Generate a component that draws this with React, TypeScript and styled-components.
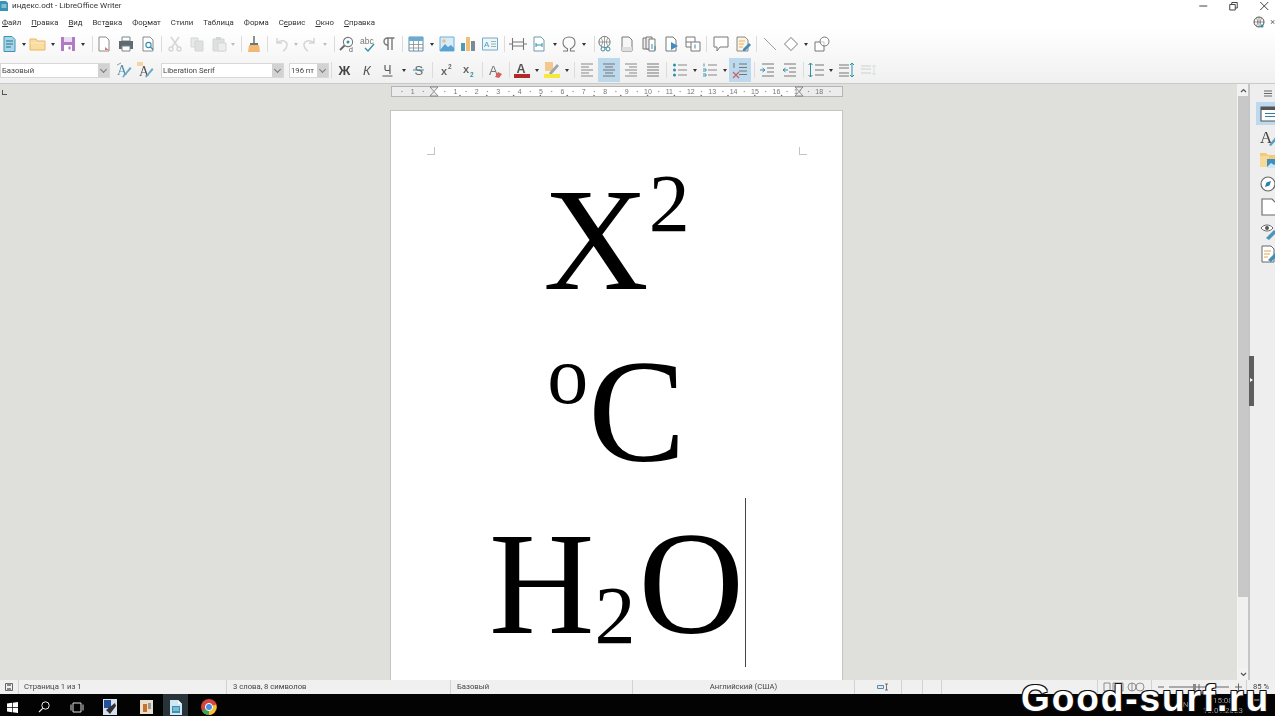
import React from "react";
import styled, { createGlobalStyle } from "styled-components";

const Global = createGlobalStyle`
  html, body { margin: 0; padding: 0; background: #000; }
  * { box-sizing: border-box; }
`;

const UI = `Roboto, "Noto Sans", "Liberation Sans", sans-serif`;

const Shell = styled.div`
  position: relative;
  width: 1275px;
  height: 716px;
  overflow: hidden;
  display: flex;
  flex-direction: column;
  font-family: ${UI};
  color: #333;
`;
const Header = styled.header`
  height: 83px;
  flex: none;
  display: flex;
  flex-direction: column;
  background: linear-gradient(#ffffff 0, #ffffff 28px, #f0f0f0 83px);
  filter: blur(0.4px);
`;
const TitleBar = styled.div`
  height: 11px;
  display: flex;
  align-items: center;
  font-size: 8.1px;
  line-height: 11px;
  color: #333;
`;
const TitleIcon = styled.svg`
  width: 8px;
  height: 10px;
  margin-right: 4px;
  flex: none;
`;
const WindowButtons = styled.div`
  margin-left: auto;
  margin-right: -4px;
  display: flex;
  align-items: center;
`;
const WindowButton = styled.svg`
  width: 30.5px;
  height: 10px;
`;
const MenuBar = styled.nav`
  height: 22px;
  display: flex;
  align-items: center;
  padding-left: 2px;
  gap: 10px;
  font-size: 7.8px;
  color: #333;
`;
const MenuItem = styled.span`
  white-space: nowrap;
`;
const MenuEnd = styled.div`
  margin-left: auto;
  display: flex;
  align-items: center;
  gap: 5px;
  margin-right: 0;
  font-size: 9px;
  color: #666;
`;
const Toolbar = styled.div<{ $h: number; $top?: number }>`
  height: ${(p) => p.$h}px;
  padding-top: ${(p) => p.$top || 0}px;
  display: flex;
  align-items: center;
`;
const Tool = styled.div<{ $w: number; $active?: boolean }>`
  width: ${(p) => p.$w}px;
  height: 24px;
  flex: none;
  display: flex;
  align-items: center;
  justify-content: center;
  background: ${(p) => (p.$active ? "#bcd9ee" : "transparent")};
`;
const Caret = styled.div<{ $w: number; $dim?: boolean }>`
  width: ${(p) => p.$w}px;
  flex: none;
  display: flex;
  align-items: center;
  justify-content: center;
  opacity: ${(p) => (p.$dim ? 0.3 : 1)};
  &::before {
    content: "";
    border-left: 2.5px solid transparent;
    border-right: 2.5px solid transparent;
    border-top: 3px solid #333;
  }
`;
const Sep = styled.div<{ $w: number }>`
  width: ${(p) => p.$w}px;
  flex: none;
  display: flex;
  justify-content: center;
  &::before {
    content: "";
    width: 1px;
    height: 16px;
    background: #dcdcdc;
  }
`;
const Combo = styled.div<{ $w: number; $ml?: number }>`
  width: ${(p) => p.$w}px;
  margin-left: ${(p) => p.$ml || 0}px;
  height: 15px;
  flex: none;
  display: flex;
  background: #fff;
  border: 1px solid #d8d8d8;
  font-size: 7.7px;
  line-height: 14px;
  color: #444;
`;
const ComboText = styled.span`
  flex: 1;
  padding-left: 1px;
  white-space: nowrap;
  overflow: hidden;
`;
const ComboButton = styled.span`
  width: 11px;
  flex: none;
  background: #d2d2d2;
  display: flex;
  align-items: center;
  justify-content: center;
  &::before {
    content: "";
    width: 4px;
    height: 4px;
    margin-top: -2px;
    border-right: 1px solid #777;
    border-bottom: 1px solid #777;
    transform: rotate(45deg);
  }
`;
const Main = styled.main`
  height: 597px;
  flex: none;
  display: flex;
  border-top: 1px solid #c9c9c9;
  background: #dfe0dc;
`;
const Workspace = styled.div`
  width: 1237px;
  flex: none;
  padding-top: 2px;
  position: relative;
  overflow: hidden;
`;
const TabCorner = styled.div`
  position: absolute;
  left: 2px;
  top: 6px;
  width: 5px;
  height: 5px;
  border-left: 1px solid #555;
  border-bottom: 1px solid #555;
`;
const RulerWrap = styled.div`
  margin-left: 391px;
  height: 11px;
  filter: blur(0.4px);
`;
const Page = styled.section`
  width: 453px;
  height: 600px;
  margin: 13px 0 0 390px;
  padding-top: 36px;
  background: #fff;
  border: 1px solid #c4c4c4;
`;
const Marks = styled.div`
  height: 7px;
  display: flex;
  justify-content: space-between;
  padding: 0 35px 0 36px;
`;
const Mark = styled.span<{ $flip?: boolean }>`
  width: 8px;
  height: 8px;
  ${(p) =>
    p.$flip
      ? "border-left: 1px solid #c4c4c4; border-bottom: 1px solid #c4c4c4;"
      : "border-right: 1px solid #c4c4c4; border-bottom: 1px solid #c4c4c4;"}
`;
const Line = styled.div`
  position: relative;
  height: 172px;
  line-height: 172px;
  text-align: center;
  white-space: nowrap;
  font-family: "Liberation Serif", serif;
  font-size: 146px;
  color: #000;
`;
const Sup = styled.span`
  font-size: 82px;
  line-height: 0;
  vertical-align: 58px;
`;
const Sub = styled.span`
  font-size: 82px;
  line-height: 0;
  letter-spacing: 3px;
  vertical-align: -10px;
`;
const Cursor = styled.span`
  position: absolute;
  left: 354px;
  top: 0;
  width: 1px;
  height: 169px;
  background: #444;
`;
const ScrollBar = styled.div`
  width: 11px;
  flex: none;
  display: flex;
  flex-direction: column;
  background: #f0f0ee;
  border-left: 1px solid #f4f4f2;
`;
const ScrollEnd = styled.div`
  height: 12px;
  flex: none;
  display: flex;
  align-items: center;
  justify-content: center;
  background: #f2f2f2;
`;
const ScrollThumb = styled.div`
  height: 501px;
  flex: none;
  background: #c8c8c8;
`;
const ScrollRest = styled.div`
  flex: 1;
`;
const SideBar = styled.aside`
  position: relative;
  flex: 1;
  display: flex;
  flex-direction: column;
  align-items: flex-start;
  padding-left: 6px;
  background: #eeeeee;
  border-left: 2px solid #c6c6c6;
  filter: blur(0.35px);
`;
const SideMenu = styled.div`
  height: 18px;
  width: 100%;
  display: flex;
  align-items: center;
  padding-left: 8px;
`;
const SideButton = styled.div<{ $active?: boolean }>`
  width: 19px;
  height: 23.4px;
  flex: none;
  padding-left: 4px;
  display: flex;
  align-items: center;
  overflow: hidden;
  background: ${(p) => (p.$active ? "#bcd9ee" : "transparent")};
`;
const Handle = styled.div`
  position: absolute;
  left: -1px;
  top: 272px;
  width: 5px;
  height: 50px;
  background: #5e5e5e;
  &::after {
    content: "";
    position: absolute;
    left: 1px;
    top: 22px;
    border-top: 2.5px solid transparent;
    border-bottom: 2.5px solid transparent;
    border-left: 3px solid #fff;
  }
`;
const StatusBar = styled.footer`
  height: 14px;
  flex: none;
  display: flex;
  align-items: stretch;
  background: #f0f0f0;
  font-size: 7.7px;
  line-height: 14px;
  color: #444;
  filter: blur(0.35px);
`;
const Cell = styled.div<{ $w: number; $center?: boolean; $pad?: number; $last?: boolean }>`
  width: ${(p) => p.$w}px;
  flex: none;
  display: flex;
  align-items: center;
  justify-content: ${(p) => (p.$center ? "center" : "flex-start")};
  padding-left: ${(p) => p.$pad || 0}px;
  border-right: ${(p) => (p.$last ? "0" : "1px solid #d2d2d2")};
  white-space: nowrap;
`;
const Taskbar = styled.div`
  height: 22px;
  flex: none;
  display: flex;
  align-items: center;
  background: #030303;
  filter: blur(0.35px);
`;
const TaskItem = styled.div<{ $w: number; $active?: boolean }>`
  width: ${(p) => p.$w}px;
  height: 22px;
  padding-top: 4px;
  flex: none;
  display: flex;
  align-items: center;
  justify-content: center;
  background: ${(p) => (p.$active ? "#273338" : "transparent")};
`;
const Tray = styled.div`
  margin-left: auto;
  display: flex;
  align-items: center;
  gap: 9px;
  padding-right: 9px;
  font-size: 8px;
  line-height: 10px;
  color: #9a9a9a;
`;
const Clock = styled.div`
  text-align: center;
  padding-top: 2px;
`;
const Watermark = styled.div`
  position: absolute;
  left: 1021px;
  top: 680px;
  font-family: "Liberation Sans", Arial, sans-serif;
  font-weight: 700;
  font-size: 37px;
  line-height: 37px;
  letter-spacing: 1.9px;
  color: #fff;
  white-space: nowrap;
  text-shadow: 1px 1px 0 #111, -1px 1px 0 #111, 1px -1px 0 #111, -1px -1px 0 #111;
`;
const Ico = styled.svg`
  width: 18px;
  height: 18px;
  flex: none;
  display: block;
`;

const G = "#5f6b70";
const L = "#d4d6d6";
const T = "#2f8fa8";

const icons: Record<string, React.ReactNode> = {
  new: (<><path d="M4 1.500h8l3 3v12H4z" fill="#a9d5e7" stroke="#3a93b4" /><path d="M6 6h7M6 9h7M6 12h5" stroke="#1f7392" strokeWidth="1.200" /></>),
  open: (<><path d="M1 15V4h6l1.500 2H16v9z" fill="#f9dca0" stroke="#eab662" /><path d="M1.500 8h14" stroke="#fbe9c4" /></>),
  save: (<><path d="M2 2h14v14H2z" fill="#b07ac4" /><path d="M5 2h8v5H5z" fill="#ecdcf2" /><path d="M5 10h8v6H5z" fill="#fff" /><path d="M9.500 11.500h2v3h-2z" fill="#b07ac4" /></>),
  pdf: (<><path d="M4 2h7l3 3v11H4z" fill="#fff" stroke="#8a8a8a" /><path d="M10 12l4 3h-4z" fill="#d9776f" /></>),
  print: (<><path d="M5 2h8v4H5z" fill="#fff" stroke="#7b868b" /><path d="M2 6h14v8H2z" fill={G} /><path d="M5 11h8v5H5z" fill="#fff" stroke="#7b868b" /></>),
  preview: (<><path d="M4 2h7l3 3v11H4z" fill="#fff" stroke="#8a8a8a" /><circle cx="9.500" cy="10" r="2.600" fill="none" stroke={T} strokeWidth="1.100" /><path d="M11.500 12l2.500 2.500" stroke={T} strokeWidth="1.300" /></>),
  cut: (<><path d="M5 2l7 10M13 2L6 12" stroke={L} strokeWidth="1.500" /><circle cx="5" cy="14" r="2" fill="none" stroke={L} strokeWidth="1.400" /><circle cx="13" cy="14" r="2" fill="none" stroke={L} strokeWidth="1.400" /></>),
  copy: (<><path d="M3 3h7v9H3z" fill="#e8e9e9" stroke={L} /><path d="M7 6h8v10H7z" fill="#dfe0e0" stroke={L} /></>),
  paste: (<><path d="M3 4h11v12H3z" fill="#dfe0e0" stroke={L} /><path d="M6 2h5v3H6z" fill={L} /><path d="M8 8h8v8H8z" fill="#eceded" stroke={L} /></>),
  brush: (<><path d="M8 1h2v7H8z" fill="#8a8f90" /><path d="M5 8h8v2H5z" fill="#6f7576" /><path d="M4 10h10l1 7H3z" fill="#f3b873" /></>),
  undo: (<path d="M5 3v5h5M5 8c3-3.500 9-3 10 1 .5 3-2 6-4 7" fill="none" stroke={L} strokeWidth="1.500" />),
  redo: (<path d="M13 3v5H8M13 8c-3-3.500-9-3-10 1-.5 3 2 6 4 7" fill="none" stroke={L} strokeWidth="1.500" />),
  find: (<><circle cx="10" cy="7" r="4.600" fill="#fff" stroke="#777" strokeWidth="1.100" /><path d="M6.500 10.500L2 15" stroke="#666" strokeWidth="1.800" /><circle cx="10" cy="7" r="1.500" fill={T} /><text x="11" y="17" fontSize="7" fill="#555" fontFamily="Liberation Sans">d</text></>),
  spell: (<><text x="1" y="9" fontSize="8.500" fill="#777" fontFamily="Liberation Sans">abc</text><path d="M6 13l3 3 6-7" fill="none" stroke={T} strokeWidth="1.300" /></>),
  pilcrow: (<path d="M8 15V3M12 15V3M14.500 3H7.500a3.500 3.500 0 0 0 0 7H8" fill="none" stroke="#777" strokeWidth="1.400" />),
  table: (<><path d="M2 2h14v14H2z" fill="#fff" stroke="#5a90b2" /><path d="M2 2h14v4H2z" fill="#6aabd0" /><path d="M2 9.500h14M2 13h14M6.500 6v10M11.500 6v10" stroke="#888" strokeWidth=".8" /></>),
  image: (<><path d="M2 2h14v14H2z" fill="#d8ebf7" stroke="#6cb0da" /><path d="M2 15l5-6 3 3 3-2 3 3v3H2z" fill="#5aa2d2" /><circle cx="6" cy="6" r="1.700" fill="#f2bb6f" /></>),
  chart: (<><path d="M2 8h4v8H2z" fill="#4f9bb3" /><path d="M7 2h4v14H7z" fill="#ecc078" /><path d="M12 6h4v10h-4z" fill="#7a8d96" /></>),
  textbox: (<><path d="M1.500 3h15v12h-15z" fill="#eef6fb" stroke="#74a8c8" /><text x="3" y="12" fontSize="8" fill="#4f9ac2" fontFamily="Liberation Sans">A</text><path d="M10 6.500h5M10 9h5M10 11.500h5" stroke="#7a9" strokeWidth=".8" /></>),
  break: (<path d="M3.500 3v12M14.500 3v12M0 9h3M15 9h3M4 7h10M4 11h10" fill="none" stroke="#777" strokeWidth="1.100" />),
  field: (<><path d="M4 2h7l3 3v11H4z" fill="#fff" stroke="#6e9aad" /><path d="M6 10h6M6 8v4M12 8v4" stroke={T} strokeWidth="1" /></>),
  omega: (<path d="M3 16h4.500v-2.200C4.800 12.500 3 10.300 3 7.500 3 4 5.600 2 9 2s6 2 6 5.500c0 2.800-1.800 5-4.500 6.300V16H15" fill="none" stroke="#777" strokeWidth="1.100" />),
  link: (<><circle cx="8.500" cy="7" r="5.600" fill="#fff" stroke="#777" /><path d="M3 7h11M8.500 1.500v11M5 3c2 3 2 5 0 8M12 3c-2 3-2 5 0 8" stroke="#777" strokeWidth=".7" fill="none" /><circle cx="7" cy="14" r="2" fill="#fff" stroke={T} /><circle cx="12" cy="14" r="2" fill="#fff" stroke={T} /></>),
  foot: (<><path d="M4 2h7l3 3v11H4z" fill="#f6f6f6" stroke="#777" /><path d="M4 12h10v4H4z" fill="#dcdfe0" /></>),
  end: (<><path d="M2 3h6v11H2z" fill="#eee" stroke="#777" /><path d="M5 2h6v12H5z" fill="#eee" stroke="#777" /><path d="M8 4h6v12H8z" fill="#fff" stroke="#777" /><path d="M11 9v5M14 11v4" stroke={T} /></>),
  book: (<><path d="M3 2h7l3 3v11H3z" fill="#fff" stroke="#777" /><path d="M8 7l7 4-7 4z" fill="#3f8cc2" /></>),
  cross: (<><path d="M2 2h9v10H2z" fill="#fff" stroke="#777" /><path d="M7 7h9v9H7z" fill="#fff" stroke="#777" /><path d="M2 7h5" stroke="#777" /><path d="M11 9.500v4" stroke={T} /></>),
  comment: (<path d="M2 2h14v10H8l-3 4v-4H2z" fill="#fff" stroke="#777" strokeWidth="1" />),
  track: (<><path d="M3 2h8l3 3v11H3z" fill="#fdf3e2" stroke="#888" /><path d="M5 6h6M5 9h5M5 12h4" stroke="#e8ae63" /><path d="M9 14l6-6 2 2-6 6H9z" fill="#3f8cc2" /></>),
  line: (<path d="M3 3l12 12" stroke="#9a9fa2" strokeWidth="1" />),
  diamond: (<path d="M9 2.500L15.500 9 9 15.500 2.500 9z" fill="#fff" stroke="#777" strokeWidth="1" />),
  shapes: (<><path d="M2 7h9v9H2z" fill="#fff" stroke="#777" /><circle cx="11.500" cy="6.500" r="4.500" fill="#fff" fillOpacity=".6" stroke="#777" /></>),
  sty1: (<><text x="3" y="14" fontSize="14" fill="#4f8fae" fontFamily="Liberation Serif">A</text><path d="M8 16l8-10 1.500 1.500-8 9z" fill="#65aaca" /><path d="M3 4l4-2" stroke="#999" /></>),
  sty2: (<><text x="3" y="15" fontSize="14" fill="#555" fontFamily="Liberation Serif">A</text><path d="M9 16l7-9 1.500 1.500-7 8z" fill="#65aaca" /><path d="M1 1h6v4H1z" fill="#f5d4a2" /></>),
  bold: (<text x="2.500" y="14" fontSize="13" fontWeight="700" fill="#444" fontFamily="Liberation Sans">Ж</text>),
  italic: (<text x="5" y="14" fontSize="13" fontStyle="italic" fill="#555" fontFamily="Liberation Sans">К</text>),
  under: (<><text x="4.500" y="12.500" fontSize="12" fill="#555" fontFamily="Liberation Sans">Ч</text><path d="M3.500 15h10" stroke="#555" /></>),
  strike: (<><text x="4.500" y="14" fontSize="13" fill="#666" fontFamily="Liberation Sans">S</text><path d="M3 9h11" stroke={T} /></>),
  sup: (<><text x="3" y="14" fontSize="11" fontWeight="700" fill="#666" fontFamily="Liberation Sans">x</text><text x="10" y="8" fontSize="6.500" fontWeight="700" fill="#666" fontFamily="Liberation Sans">2</text></>),
  sub: (<><text x="3" y="12" fontSize="11" fontWeight="700" fill="#666" fontFamily="Liberation Sans">x</text><text x="10" y="16" fontSize="6.500" fontWeight="700" fill={T} fontFamily="Liberation Sans">2</text></>),
  clear: (<><text x="3" y="14" fontSize="13" fill="#777" fontFamily="Liberation Sans">A</text><path d="M9 16l3-5 4 2-3 4z" fill="#d9605a" /></>),
  color: (<><text x="3.500" y="11.500" fontSize="12.500" fontWeight="700" fill="#555" fontFamily="Liberation Sans">A</text><path d="M1 13h16v4H1z" fill="#b02a2a" /></>),
  high: (<><path d="M2 1h8v9H2z" fill="#f5c78c" /><path d="M6 12L14 3l2 2-8 9z" fill="#9aa6ab" /><path d="M1 13h16v4H1z" fill="#f4ea3c" /></>),
  left: (<path d="M3 3h12M3 6h8M3 9h12M3 12h8M3 15h12" stroke="#888" strokeWidth="1.100" />),
  center: (<path d="M3 3h12M5 6h8M3 9h12M5 12h8M3 15h12" stroke="#777" strokeWidth="1.100" />),
  right: (<path d="M3 3h12M7 6h8M3 9h12M7 12h8M3 15h12" stroke="#888" strokeWidth="1.100" />),
  justify: (<path d="M3 3h12M3 6h12M3 9h12M3 12h12M3 15h12" stroke="#777" strokeWidth="1.100" />),
  bullets: (<><path d="M7 4h9M7 9h9M7 14h9" stroke="#888" strokeWidth="1.100" /><circle cx="3.500" cy="4" r="1.500" fill={T} /><circle cx="3.500" cy="9" r="1.500" fill={T} /><circle cx="3.500" cy="14" r="1.500" fill={T} /></>),
  numbers: (<><path d="M7 4h9M7 9h9M7 14h9" stroke="#888" strokeWidth="1.100" /><path d="M3 2.500v3M2 8h3v2H2M2 13h3v2H2" stroke={T} fill="none" strokeWidth=".9" /></>),
  outline: (<><path d="M8 3h8M8 6.500h8M8 10h8M8 13.500h8" stroke="#777" strokeWidth="1.100" /><path d="M3 2v5" stroke="#777" /><path d="M2 11l6 6M8 11l-6 6" stroke="#d0605f" strokeWidth="1.200" /></>),
  indent: (<><path d="M3 3h12M8 7h7M8 11h7M3 15h12" stroke="#777" strokeWidth="1.100" /><path d="M1 9h4M3.500 7l2.500 2-2.500 2" stroke={T} fill="none" /></>),
  outdent: (<><path d="M3 3h12M8 7h7M8 11h7M3 15h12" stroke="#777" strokeWidth="1.100" /><path d="M7 9H2M4.500 7L2 9l2.500 2" stroke={T} fill="none" /></>),
  spacing: (<><path d="M8 4h9M8 9h9M8 14h9" stroke="#777" strokeWidth="1.100" /><path d="M3.500 2v14M1.500 4l2-2 2 2M1.500 14l2 2 2-2" stroke={T} fill="none" /></>),
  para: (<><path d="M2 4h10M2 7h10" stroke="#777" strokeWidth="1.100" /><path d="M2 12h10M2 15h10" stroke="#777" strokeWidth="1.100" /><path d="M15 2v14M13 4l2-2 2 2M13 14l2 2 2-2" stroke={T} fill="none" /></>),
  para2: (<><path d="M2 5h10M2 8h10M2 12h10" stroke="#d0d0d0" strokeWidth="1.100" /><path d="M15 4v10M13 6l2-2 2 2M13 12l2 2 2-2" stroke="#d2e2e2" fill="none" /></>),
  sProps: (<><path d="M1 2h18v14H1z" fill="#fff" stroke="#555" strokeWidth="1.100" /><path d="M1 2h18v3H1z" fill="#555" /><path d="M5 8.500h10M5 11.500h10" stroke="#2f7fa0" /></>),
  sStyles: (<><text x="0" y="15" fontSize="17" fill="#444" fontFamily="Liberation Serif">A</text><path d="M9 17l8-10 2 2-8 9z" fill="#5a9fbf" /></>),
  sGallery: (<><path d="M0 5V2h6l2 2h8v4H0z" fill="#f4c97a" /><path d="M0 5h9v11H0z" fill="#f7d998" /><path d="M7 8h12v9H7z" fill="#3f8fc0" /><path d="M7 16l4-4 3 2 3-2 2 2v3H7z" fill="#cfe6f5" /></>),
  sNav: (<><circle cx="8" cy="9" r="7" fill="#fff" stroke="#666" strokeWidth="1.100" /><path d="M11 6L9.500 10.500 5 12l1.500-4.500z" fill="#2f7fa8" /></>),
  sPage: (<path d="M2 1h10l4 4v12H2z" fill="#fff" stroke="#666" strokeWidth="1.100" />),
  sInspect: (<><path d="M1 6c3-4 9-4 12 0-3 4-9 4-12 0z" fill="#fff" stroke="#666" /><circle cx="7" cy="6" r="2" fill="#555" /><path d="M6 16l8-8 3 2-8 8z" fill="#4c97b8" /></>),
  sManage: (<><path d="M2 1h9l3 3v13H2z" fill="#fff" stroke="#666" /><path d="M4 6h7M4 9h6M4 12h4" stroke="#e5a24e" /><path d="M8 15l7-7 3 2-7 7z" fill="#3f8fb8" /></>),
};

type Item = [string, number, boolean?];
const row1: Item[] = [
  ["new", 18], ["^", 12], ["open", 16], ["^", 14], ["save", 16], ["^", 14], ["|", 4],
  ["pdf", 20], ["print", 24], ["preview", 20], ["|", 6],
  ["cut", 22], ["copy", 22], ["paste", 22], ["~", 6], ["|", 10],
  ["brush", 16], ["|", 10], ["undo", 18], ["~", 12], ["redo", 16], ["~", 14], ["|", 4],
  ["find", 22], ["spell", 20], ["pilcrow", 22], ["|", 4],
  ["table", 24], ["^", 8], ["image", 22], ["chart", 20], ["textbox", 24], ["|", 4],
  ["break", 24], ["field", 18], ["^", 14], ["omega", 14], ["^", 16], ["|", 4],
  ["link", 18], ["foot", 26], ["end", 20], ["book", 24], ["cross", 18], ["|", 8],
  ["comment", 22], ["track", 22], ["|", 4],
  ["line", 24], ["diamond", 18], ["^", 12], ["shapes", 20],
];
const row2: Item[] = [
  ["bold", 22], ["italic", 22], ["under", 20], ["^", 12], ["strike", 18], ["|", 8],
  ["sup", 22], ["sub", 22], ["|", 4], ["clear", 22], ["|", 6],
  ["color", 20], ["^", 10], ["high", 20], ["^", 10], ["|", 4],
  ["left", 22], ["center", 22, true], ["right", 22], ["justify", 22], ["|", 5],
  ["bullets", 22], ["^", 8], ["numbers", 22], ["^", 8], ["outline", 22, true], ["|", 6],
  ["indent", 22], ["outdent", 22], ["|", 4], ["spacing", 22], ["^", 8], ["para", 22], ["para2", 22],
];

const renderItems = (items: Item[]) =>
  items.map(([k, w, active], i) => {
    if (k === "^") return <Caret key={i} $w={w} />;
    if (k === "~") return <Caret key={i} $w={w} $dim />;
    if (k === "|") return <Sep key={i} $w={w} />;
    return (
      <Tool key={i} $w={w} $active={active}>
        <Ico viewBox="0 0 18 18">{icons[k]}</Ico>
      </Tool>
    );
  });

const Ruler = () => {
  const nums: React.ReactNode[] = [];
  const origin = 43;
  const unit = 21.4;
  for (let n = -1; n <= 18; n++) {
    if (n === 0) continue;
    const x = origin + n * unit;
    nums.push(
      <text key={n} x={x} y="7.500" fontSize="7" fill="#777" textAnchor="middle" fontFamily="Liberation Sans">
        {Math.abs(n)}
      </text>,
    );
  }
  const dots: React.ReactNode[] = [];
  for (let n = -2; n <= 19; n++) {
    const x = origin + (n + 0.5) * unit;
    if (x > 2 && x < 450) dots.push(<circle key={n} cx={x} cy="5.500" r=".7" fill="#999" />);
  }
  const tabs: React.ReactNode[] = [];
  for (let i = 0; i < 13; i++) {
    tabs.push(<path key={i} d={`M${69 + 26.8 * i - 1} 10h2l-1-1.500z`} fill="#666" />);
  }
  return (
    <svg width="452" height="11" viewBox="0 0 452 11" style={{ display: "block" }}>
      <rect x=".5" y=".5" width="451" height="10" fill="#ececec" stroke="#b5b5b5" />
      <rect x="43" y="1" width="366" height="9" fill="#fff" />
      {dots}
      {nums}
      {tabs}
      <path d="M39 1h8l-4 4.500zM39 10h8l-4-4.500z" fill="#eee" stroke="#777" strokeWidth=".8" />
      <path d="M404 1h8l-4 4.500zM404 10h8l-4-4.500z" fill="#eee" stroke="#777" strokeWidth=".8" />
    </svg>
  );
};

const sideItems = ["sStyles", "sGallery", "sNav", "sPage", "sInspect", "sManage"];

export default function App() {
  return (
    <Shell>
      <Global />
      <Header>
        <TitleBar>
          <TitleIcon viewBox="0 0 8 10">
            <path d="M0 0h6l2 2v8H0z" fill="#3a93b4" />
            <path d="M1.500 4h5M1.500 6h5" stroke="#fff" strokeWidth=".8" />
          </TitleIcon>
          индекс.odt - LibreOffice Writer
          <WindowButtons>
            <WindowButton viewBox="0 0 30 10">
              <path d="M11 5h8" stroke="#444" />
            </WindowButton>
            <WindowButton viewBox="0 0 30 10">
              <path d="M11.500 3.500h5.500v5.500h-5.500zM13.500 3.500v-2h5.500v5.500h-2" fill="none" stroke="#444" />
            </WindowButton>
            <WindowButton viewBox="0 0 30 10">
              <path d="M11 1l8 8M19 1l-8 8" stroke="#444" />
            </WindowButton>
          </WindowButtons>
        </TitleBar>
        <MenuBar>
          <MenuItem><u>Ф</u>айл</MenuItem>
          <MenuItem><u>П</u>равка</MenuItem>
          <MenuItem><u>В</u>ид</MenuItem>
          <MenuItem>Вст<u>а</u>вка</MenuItem>
          <MenuItem>Фо<u>р</u>мат</MenuItem>
          <MenuItem>Стили</MenuItem>
          <MenuItem>Таблица</MenuItem>
          <MenuItem>Форма</MenuItem>
          <MenuItem>С<u>е</u>рвис</MenuItem>
          <MenuItem><u>О</u>кно</MenuItem>
          <MenuItem><u>С</u>правка</MenuItem>
          <MenuEnd>
            <svg width="12" height="12" viewBox="0 0 12 12">
              <circle cx="6" cy="6" r="5" fill="#fff" stroke="#555" />
              <path d="M1 6h10M6 1v10M3.500 2c1.500 2.500 1.500 5.500 0 8M8.500 2c-1.500 2.500-1.500 5.500 0 8" stroke="#555" strokeWidth=".6" fill="none" />
              <circle cx="9" cy="10" r="1.600" fill={T} />
            </svg>
            ×
          </MenuEnd>
        </MenuBar>
        <Toolbar $h={22}>{renderItems(row1)}</Toolbar>
        <Toolbar $h={28} $top={2}>
          <Combo $w={110}>
            <ComboText>Базовый</ComboText>
            <ComboButton />
          </Combo>
          <Tool $w={26}><Ico viewBox="0 0 18 18">{icons.sty1}</Ico></Tool>
          <Tool $w={18}><Ico viewBox="0 0 18 18">{icons.sty2}</Ico></Tool>
          <Combo $w={123} $ml={7}>
            <ComboText>Liberation Serif</ComboText>
            <ComboButton />
          </Combo>
          <Combo $w={40} $ml={5}>
            <ComboText>196 пт</ComboText>
            <ComboButton />
          </Combo>
          <Sep $w={5} />
          {renderItems(row2)}
        </Toolbar>
      </Header>
      <Main>
        <Workspace>
          <TabCorner />
          <RulerWrap><Ruler /></RulerWrap>
          <Page>
            <Marks><Mark /><Mark $flip /></Marks>
            <Line>X<Sup>2</Sup></Line>
            <Line><Sup>o</Sup>C</Line>
            <Line>H<Sub>2</Sub>O<Cursor /></Line>
          </Page>
        </Workspace>
        <ScrollBar>
          <ScrollEnd>
            <svg width="7" height="5" viewBox="0 0 7 5"><path d="M1 4l2.500-2.500L6 4" fill="none" stroke="#555" strokeWidth="1.200" /></svg>
          </ScrollEnd>
          <ScrollThumb />
          <ScrollRest />
          <ScrollEnd>
            <svg width="7" height="5" viewBox="0 0 7 5"><path d="M1 1l2.500 2.500L6 1" fill="none" stroke="#555" strokeWidth="1.200" /></svg>
          </ScrollEnd>
        </ScrollBar>
        <SideBar>
          <Handle />
          <SideMenu>
            <svg width="8" height="7" viewBox="0 0 8 7"><path d="M0 1h8M0 3.500h8M0 6h8" stroke="#666" /></svg>
          </SideMenu>
          <SideButton $active><Ico viewBox="0 0 18 18">{icons.sProps}</Ico></SideButton>
          {sideItems.map((k) => (
            <SideButton key={k}><Ico viewBox="0 0 18 18">{icons[k]}</Ico></SideButton>
          ))}
        </SideBar>
      </Main>
      <StatusBar>
        <Cell $w={19} $center>
          <svg width="8" height="8" viewBox="0 0 8 8"><path d="M.5.500h7v7h-7z" fill="none" stroke="#666" /><path d="M2 .500h4v2.500H2zM2 5h4v2.500H2z" fill="#888" /></svg>
        </Cell>
        <Cell $w={208} $pad={5}>Страница 1 из 1</Cell>
        <Cell $w={224} $pad={6}>3 слова, 8 символов</Cell>
        <Cell $w={182} $pad={6}>Базовый</Cell>
        <Cell $w={222} $center>Английский (США)</Cell>
        <Cell $w={47} $center $pad={10}>
          <svg width="12" height="8" viewBox="0 0 12 8"><path d="M.5 2.500h6v3h-6z" fill="#dfeaf2" stroke="#5b8aa8" /><path d="M9.500 1v6M8 1h3M8 7h3" stroke="#555" strokeWidth=".8" fill="none" /></svg>
        </Cell>
        <Cell $w={21} />
        <Cell $w={19} />
        <Cell $w={156} />
        <Cell $w={54} $center>
          <svg width="44" height="10" viewBox="0 0 44 10"><path d="M1 1h6v8H1zM10 1h5v8h-5zM15 1h5v8h-5zM25 5a4 4 0 1 0 8 0 4 4 0 1 0-8 0zM29 1v8M33 5a4 4 0 1 0 8 0 4 4 0 1 0-8 0" fill="none" stroke="#777" strokeWidth=".8" /></svg>
        </Cell>
        <Cell $w={95} $center>
          <svg width="88" height="10" viewBox="0 0 88 10"><path d="M3 5h6M80 5h7M83.500 1.500v7M14 5h60M44 2v6" stroke="#666" /><path d="M38 2h3v6h-3z" fill="#888" /></svg>
        </Cell>
        <Cell $w={28} $center $last>85 %</Cell>
      </StatusBar>
      <Taskbar>
        <TaskItem $w={25}>
          <svg width="11" height="11" viewBox="0 0 11 11"><path d="M0 1.500l5-.7v4.400H0zM5.700.7L11 0v5.200H5.700zM0 5.900h5v4.300l-5-.7zM5.700 5.900H11V11l-5.300-.8z" fill="#fff" /></svg>
        </TaskItem>
        <TaskItem $w={38}>
          <svg width="12" height="12" viewBox="0 0 12 12"><circle cx="7.500" cy="4.500" r="3.700" fill="none" stroke="#eee" /><path d="M4.700 7.300L1 11" stroke="#eee" strokeWidth="1.200" /></svg>
        </TaskItem>
        <TaskItem $w={27}>
          <svg width="14" height="11" viewBox="0 0 14 11"><path d="M3 1h8v9H3zM1 2.500v6M13 2.500v6" fill="none" stroke="#ddd" /></svg>
        </TaskItem>
        <TaskItem $w={39}>
          <svg width="14" height="16" viewBox="0 0 14 16"><path d="M0 0h14v16H0z" fill="#d8e2ee" /><path d="M1 1h7v8H1z" fill="#264f9c" /><path d="M3 11l9-7 1 3-6 8z" fill="#333" /></svg>
        </TaskItem>
        <TaskItem $w={34}>
          <svg width="13" height="14" viewBox="0 0 13 14"><path d="M0 0h13v14H0z" fill="#e8e0cc" /><path d="M3 4h4v8H3z" fill="#c8712f" /><path d="M8 3h3v6H8z" fill="#999" /></svg>
        </TaskItem>
        <TaskItem $w={25} $active>
          <svg width="12" height="15" viewBox="0 0 12 15"><path d="M0 0h8l4 4v11H0z" fill="#cfe8f5" /><path d="M8 0l4 4H8z" fill="#fff" /><path d="M2 6h8v7H2z" fill="#3a93b4" /><path d="M3 8h6M3 10h6" stroke="#fff" strokeWidth=".7" /></svg>
        </TaskItem>
        <TaskItem $w={42}>
          <svg width="16" height="16" viewBox="0 0 16 16">
            <circle cx="8" cy="8" r="8" fill="#d9443a" />
            <path d="M8 8L1 12a8 8 0 0 0 7 4z" fill="#3aa757" />
            <path d="M8 8l7-2.500A8 8 0 0 1 8 16z" fill="#f5c431" />
            <circle cx="8" cy="8" r="3.600" fill="#4a8ee8" stroke="#fff" />
          </svg>
        </TaskItem>
        <Tray>
          <span>ENG</span>
          <Clock>15:08<br />15.01.2023</Clock>
          <svg width="14" height="12" viewBox="0 0 14 12"><path d="M1 1h12v8H6l-3 2V9H1z" fill="none" stroke="#bbb" /></svg>
        </Tray>
      </Taskbar>
      <Watermark>Good-surf.ru</Watermark>
    </Shell>
  );
}
